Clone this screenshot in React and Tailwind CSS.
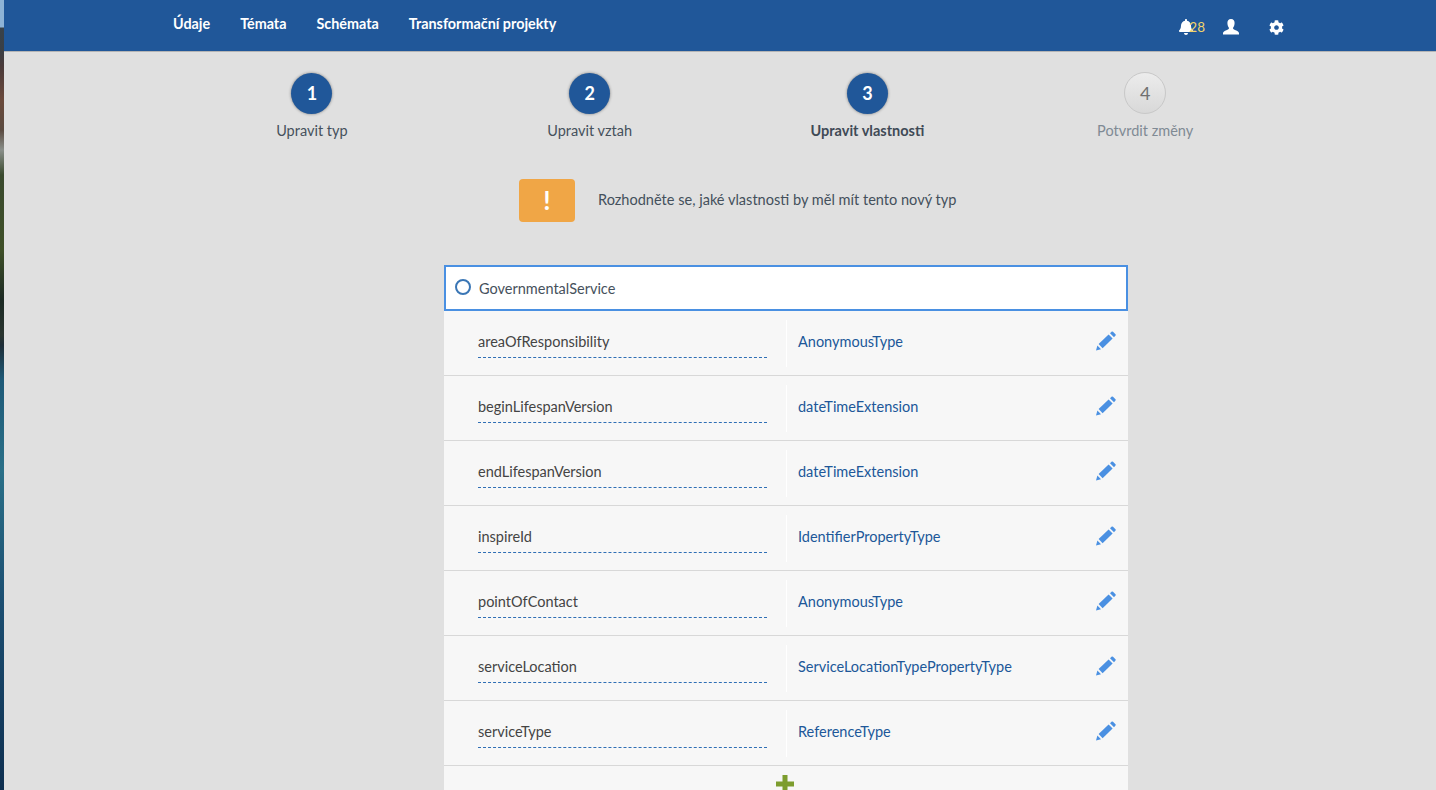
import React from "react";
import { FaBell, FaCog } from "react-icons/fa";

const rows = [
  ["areaOfResponsibility", "AnonymousType"],
  ["beginLifespanVersion", "dateTimeExtension"],
  ["endLifespanVersion", "dateTimeExtension"],
  ["inspireId", "IdentifierPropertyType"],
  ["pointOfContact", "AnonymousType"],
  ["serviceLocation", "ServiceLocationTypePropertyType"],
  ["serviceType", "ReferenceType"],
];

const steps = [
  ["1", "Upravit typ", "done"],
  ["2", "Upravit vztah", "done"],
  ["3", "Upravit vlastnosti", "active"],
  ["4", "Potvrdit změny", "todo"],
];

function Pencil() {
  return (
    <svg viewBox="0 0 20 20" className="h-[20px] w-[20px] text-[#4a90e2]" fill="currentColor">
      <path d="M0 19.5 L1.4 14.6 L5 18.2 Z" />
      <path d="M2.6 13 L12.6 3.6 L16.6 7.6 L6.6 17.2 Z" />
      <path d="M14 2.2 L15.8 0.6 Q16.4 0.2 17 0.7 L19.5 3.2 Q20 3.8 19.5 4.4 L18 6.2 Z" />
    </svg>
  );
}

function UserGlyph() {
  return (
    <svg viewBox="0 0 16 16" className="ml-[18px] h-[16px] w-[16px]" fill="currentColor">
      <path d="M8 0 C10.6 0 11.6 1.9 11.6 4.1 C11.6 6.3 10.7 8 10 9 C10 10.2 11 10.6 12.6 11.2 C14.4 11.9 16 12.6 16 14.2 L16 15.5 L0 15.5 L0 14.2 C0 12.6 1.6 11.9 3.4 11.2 C5 10.6 6 10.2 6 9 C5.3 8 4.4 6.3 4.4 4.1 C4.4 1.9 5.4 0 8 0 Z" />
    </svg>
  );
}

function PlusGlyph() {
  return (
    <svg viewBox="0 0 18 18" className="ml-[-3px] h-[18px] w-[18px] text-[#7d9d2e]" fill="currentColor">
      <path d="M6.5 0h5v6.5h6.5v5h-6.5v6.5h-5v-6.5H0v-5h6.5z" />
    </svg>
  );
}

export default function App() {
  return (
    <div className="flex h-[790px] overflow-hidden bg-[#e0e0e0] font-['Lato','Noto_Sans',sans-serif] text-[14.5px]">
      <div className="w-[4px] shrink-0 bg-[linear-gradient(180deg,#8db3d6_0,#8db3d6_27px,#39424a_28px,#3a3f45_50px,#4a3a3a_66px,#6b4a3c_100px,#5a4a40_130px,#8a8f8a_150px,#3a4a2e_175px,#3f5028_250px,#1c2a24_300px,#2a3530_335px,#1e2e38_345px,#1e5a78_380px,#2a7088_470px,#1c4f72_600px,#0e2f50_790px)]" />
      <div className="flex min-w-0 flex-1 flex-col">
        <header className="flex h-[52px] shrink-0 items-start justify-between border-b border-b-[#b5b5b5] bg-[#205799] pl-[169px] pr-[152px]">
          <nav className="flex gap-[30px] pt-[14px] text-[14.35px] font-bold leading-5 text-white">
            <span>Údaje</span>
            <span>Témata</span>
            <span>Schémata</span>
            <span>Transformační projekty</span>
          </nav>
          <div className="flex items-center pt-[18px] text-white">
            <FaBell className="h-[16px] w-[16px]" />
            <span className="ml-[-5px] text-[13.5px] leading-[18px] text-[#f0d36a]">28</span>
            <UserGlyph />
            <FaCog className="ml-[30px] h-[15px] w-[15px]" />
          </div>
        </header>

        <main className="flex flex-col">
          <div className="ml-[169px] grid w-[1111px] grid-cols-4 pt-[20px]">
            {steps.map(([n, label, state]) => (
              <div key={n} className="flex flex-col items-center">
                {state === "todo" ? (
                  <div className="flex h-[42px] w-[42px] items-center justify-center rounded-full border border-[#c8c8c8] bg-gradient-to-b from-[#ececec] to-[#d8d8d8] text-[18px] text-[#707070]">
                    {n}
                  </div>
                ) : (
                  <div className="mt-[1px] flex h-[41px] w-[41px] items-center justify-center rounded-full bg-[#205799] text-[18px] font-bold text-white shadow-[0_0_3px_rgba(0,0,0,0.45)]">
                    {n}
                  </div>
                )}
                <div
                  className={
                    "mt-[7px] leading-5 " +
                    (state === "active"
                      ? "font-bold text-[#3f4a56]"
                      : state === "todo"
                        ? "text-[#7f8a94]"
                        : "text-[#46515c]")
                  }
                >
                  {label}
                </div>
              </div>
            ))}
          </div>

          <div className="ml-[515px] mt-[38px] flex items-center gap-[23px]">
            <div className="flex h-[43px] w-[56px] items-center justify-center rounded-[4px] bg-[#f0a646] text-[26px] font-bold text-white">
              !
            </div>
            <span className="mb-[1px] text-[14.55px] text-[#44505c]">Rozhodněte se, jaké vlastnosti by měl mít tento nový typ</span>
          </div>

          <div className="ml-[440px] mt-[43px] flex w-[684px] flex-col">
            <div className="flex h-[46px] items-center border-2 border-[#4a90e2] bg-white pl-[9px] pr-3">
              <span className="mb-[3px] h-[16px] w-[16px] rounded-full border-2 border-[#3a76b5]" />
              <span className="ml-[8px] mt-[1px] text-[#46515c]">GovernmentalService</span>
            </div>
            {rows.map(([name, type]) => (
              <div key={name} className="flex h-[65px] shrink-0 items-center border-b border-b-[#d8d8d8] bg-[#f7f7f7] pr-[12px]">
                <div className="ml-[34px] w-[289px]">
                  <div className="border-b border-dashed border-b-[#2f6fb5] pb-[5px] pt-[3px] leading-5 text-[#444]">{name}</div>
                </div>
                <div className="ml-[19px] h-[47px] w-px bg-white" />
                <div className="mb-[2px] ml-[11px] flex-1 text-[#205799]">{type}</div>
                <div className="mb-[5px]">
                  <Pencil />
                </div>
              </div>
            ))}
            <div className="flex h-[40px] shrink-0 justify-center bg-[#f7f7f7] pt-[9px]">
              <PlusGlyph />
            </div>
          </div>
        </main>
      </div>
    </div>
  );
}
